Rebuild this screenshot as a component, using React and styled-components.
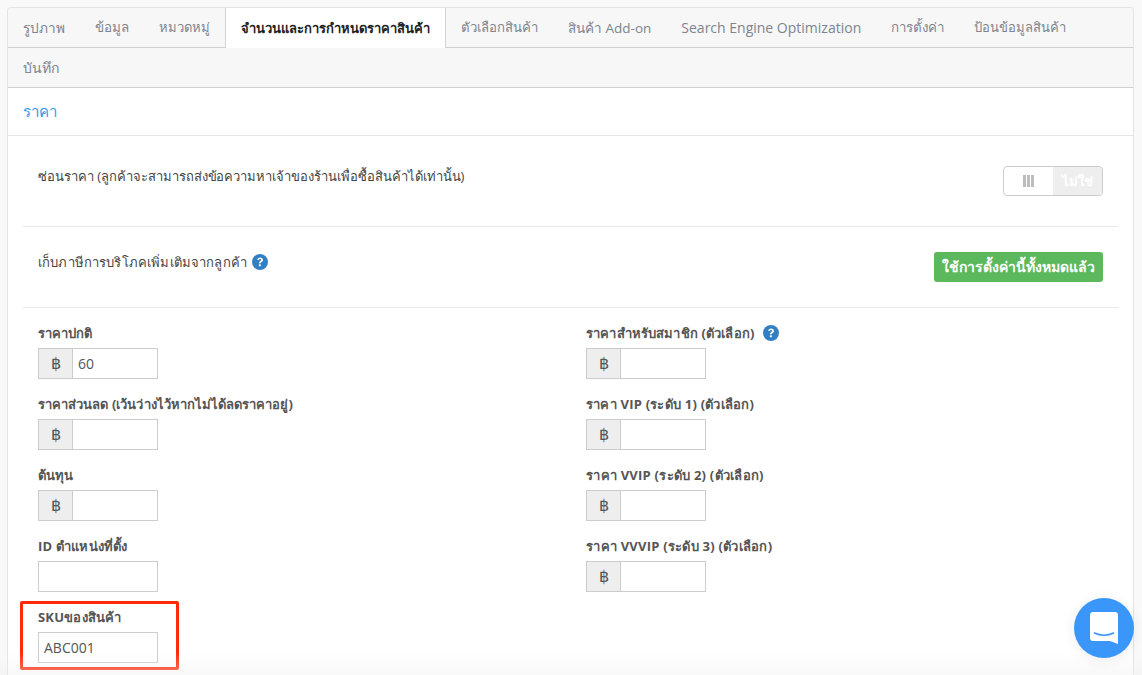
import React from "react";
import styled, { createGlobalStyle } from "styled-components";

const Global = createGlobalStyle`
  html, body { margin: 0; padding: 0; height: 675px; overflow: hidden; background: #f9f9f9; }
  * { box-sizing: border-box; }
  body { font-family: "Open Sans", "Noto Sans", "Liberation Sans", sans-serif; font-size: 13px; color: #444; }
`;

const Page = styled.div`
  height: 675px;
  padding: 7px 8px 0 7px;
  overflow: hidden;
  position: relative;
`;
const Panel = styled.div`
  background: #fff;
  border: 1px solid #e4e4e4;
  border-bottom: 0;
  border-radius: 4px 4px 0 0;
  height: 668px;
  overflow: hidden;
`;
const TabRow = styled.div`
  display: flex;
  height: 40px;
  background: #f7f7f7;
  border-bottom: 1px solid #cfcfcf;
`;
const Tab = styled.div`
  height: ${p => (p.$active ? "40px" : "39px")};
  padding: 0 15px;
  display: flex;
  align-items: center;
  font-size: ${p => p.$size}px;
  font-weight: ${p => (p.$active ? 600 : 400)};
  white-space: nowrap;
  color: ${p => (p.$active ? "#222" : "#7d8490")};
  background: ${p => (p.$active ? "#fff" : "transparent")};
  ${p => p.$active && "border-left: 1px solid #d4d4d4; border-right: 1px solid #d4d4d4; position: relative; z-index: 1;"}
`;
const SectionTitle = styled.div`
  height: 48px;
  padding: 0 15px;
  display: flex;
  align-items: center;
  font-size: 15px;
  font-weight: 500;
  color: #2d9ae8;
  border-bottom: 1px solid #e6e6e6;
`;
const Body = styled.div`
  padding: 0 15px;
`;
const SettingRow = styled.div`
  display: flex;
  justify-content: space-between;
  height: ${p => p.$h}px;
  padding: ${p => p.$top}px 15px 0 15px;
  border-bottom: 1px solid #e8e8e8;
  font-size: 13px;
  color: #444;
`;
const SettingLabel = styled.div`
  display: flex;
  align-items: flex-start;
  gap: 5px;
  line-height: 20px;
  font-weight: 500;
  letter-spacing: ${p => p.$track}px;
`;
const Switch = styled.div`
  width: 100px;
  height: 30px;
  border: 1px solid #ccc;
  border-radius: 4px;
  display: flex;
  overflow: hidden;
  background: #fff;
`;
const Handle = styled.div`
  width: 49px;
  display: flex;
  align-items: center;
  justify-content: center;
  gap: 1px;
  i { display: block; width: 3px; height: 12px; background: #bdbdbd; }
`;
const SwitchOff = styled.div`
  flex: 1;
  background: #eee;
  color: #fff;
  font-weight: 700;
  font-size: 13px;
  display: flex;
  align-items: center;
  justify-content: center;
`;
const GreenTag = styled.div`
  height: 30px;
  width: 169px;
  background: #5cb85c;
  color: #fff;
  font-weight: 700;
  font-size: 14px;
  border-radius: 3px;
  display: flex;
  align-items: center;
  justify-content: center;
  white-space: nowrap;
`;
const Grid = styled.div`
  display: grid;
  grid-template-columns: 548px 1fr;
  padding: 15px 15px 0 15px;
`;
const Column = styled.div`
  display: flex;
  flex-direction: column;
`;
const Field = styled.div`
  height: 71px;
  position: relative;
  ${p => p.$marked && `
    &::after {
      content: "";
      box-sizing: border-box;
      position: absolute;
      left: -18px; top: -6px;
      width: 159px; height: 69px;
      border: 3px solid #ff2a0c;
      border-radius: 2px;
      pointer-events: none;
    }
  `}
`;
const Label = styled.div`
  height: 25px;
  line-height: 20px;
  font-size: 13px;
  font-weight: 700;
  letter-spacing: ${p => p.$track ?? 0.05}px;
  color: #555;
  display: flex;
  align-items: flex-start;
  gap: 8px;
  white-space: nowrap;
`;
const InputGroup = styled.div`
  display: flex;
  width: 120px;
  height: 31px;
  border: 1px solid #ccc;
  background: #fff;
`;
const Addon = styled.div`
  width: 34px;
  flex: none;
  background: #eee;
  border-right: 1px solid #ccc;
  display: flex;
  align-items: center;
  justify-content: center;
  font-family: "Liberation Sans", sans-serif;
  font-size: 16px;
  color: #555;
`;
const Value = styled.div`
  padding-left: 5px;
  line-height: 29px;
  font-size: 14px;
  color: #555;
`;
const Help = styled.svg`
  width: 16px;
  height: 16px;
  flex: none;
  margin-top: 2px;
`;
const Fade = styled.div`
  position: absolute;
  left: 0; right: 0; bottom: 0;
  height: 22px;
  background: linear-gradient(to bottom, rgba(240,240,240,0), rgba(238,238,238,.4));
  pointer-events: none;
`;
const Chat = styled.div`
  position: absolute;
  left: 1074px;
  top: 598px;
  width: 60px;
  height: 60px;
  border-radius: 50%;
  background: #3a96f8;
  display: flex;
  align-items: center;
  justify-content: center;
  box-shadow: 0 2px 14px rgba(0,0,0,.07);
`;

const HelpIcon = () => (
  <Help viewBox="0 0 16 16">
    <circle cx="8" cy="8" r="8" fill="#3280c4" />
    <path d="M5.3 6.1C5.4 4.4 6.6 3.5 8.1 3.5c1.6 0 2.9.9 2.9 2.4 0 1.1-.7 1.7-1.4 2.2-.6.4-.8.6-.8 1.2H6.9c0-1.1.4-1.6 1.1-2.1.6-.4 1-.7 1-1.2 0-.5-.4-.9-1-.9-.7 0-1 .4-1.1 1z" fill="#fff" />
    <rect x="6.9" y="10.3" width="1.9" height="1.9" fill="#fff" />
  </Help>
);

const Price = ({ value }) => (
  <InputGroup>
    <Addon>฿</Addon>
    <Value>{value}</Value>
  </InputGroup>
);

const row1 = [
  ["รูปภาพ", 13.6], ["ข้อมูล", 13.4], ["หมวดหมู่", 13],
  ["จำนวนและการกำหนดราคาสินค้า", 13], ["ตัวเลือกสินค้า", 13.15],
  ["สินค้า Add-on", 13.5], ["Search Engine Optimization", 14],
  ["การตั้งค่า", 13.3], ["ป้อนข้อมูลสินค้า", 13],
];

export default function App() {
  return (
    <Page>
      <Global />
      <Panel>
        <TabRow>
          {row1.map(([t, s], i) => <Tab key={t} $size={s} $active={i === 3}>{t}</Tab>)}
        </TabRow>
        <TabRow><Tab $size={14}>บันทึก</Tab></TabRow>
        <SectionTitle>ราคา</SectionTitle>
        <Body>
          <SettingRow $h={91} $top={30}>
            <SettingLabel $track={-0.03}>ซ่อนราคา (ลูกค้าจะสามารถส่งข้อความหาเจ้าของร้านเพื่อซื้อสินค้าได้เท่านั้น)</SettingLabel>
            <Switch>
              <Handle><i /><i /><i /></Handle>
              <SwitchOff>ไม่ใช่</SwitchOff>
            </Switch>
          </SettingRow>
          <SettingRow $h={81} $top={25}>
            <SettingLabel $track={0.15}>เก็บภาษีการบริโภคเพิ่มเติมจากลูกค้า <HelpIcon /></SettingLabel>
            <GreenTag>ใช้การตั้งค่านี้ทั้งหมดแล้ว</GreenTag>
          </SettingRow>
          <Grid>
            <Column>
              <Field><Label>ราคาปกติ</Label><Price value="60" /></Field>
              <Field><Label>ราคาส่วนลด (เว้นว่างไว้หากไม่ได้ลดราคาอยู่)</Label><Price /></Field>
              <Field><Label>ต้นทุน</Label><Price /></Field>
              <Field><Label $track={0.2}>ID ตำแหน่งที่ตั้ง</Label><InputGroup /></Field>
              <Field $marked><Label $track={0.2}>SKUของสินค้า</Label><InputGroup><Value>ABC001</Value></InputGroup></Field>
            </Column>
            <Column>
              <Field><Label $track={0.15}>ราคาสำหรับสมาชิก (ตัวเลือก) <HelpIcon /></Label><Price /></Field>
              <Field><Label $track={0.22}>ราคา VIP (ระดับ 1) (ตัวเลือก)</Label><Price /></Field>
              <Field><Label $track={0.25}>ราคา VVIP (ระดับ 2) (ตัวเลือก)</Label><Price /></Field>
              <Field><Label $track={0.25}>ราคา VVVIP (ระดับ 3) (ตัวเลือก)</Label><Price /></Field>
            </Column>
          </Grid>
        </Body>
      </Panel>
      <Fade />
      <Chat>
        <svg width="28" height="32" viewBox="0 0 28 32">
          <path d="M3 0h22a3 3 0 0 1 3 3v29l-8-3H3a3 3 0 0 1-3-3V3a3 3 0 0 1 3-3z" fill="#fff" />
          <path d="M4.5 21c5.5 3 13.5 3 19 0" fill="none" stroke="#3a96f8" strokeWidth="1.6" strokeLinecap="round" />
        </svg>
      </Chat>
    </Page>
  );
}
